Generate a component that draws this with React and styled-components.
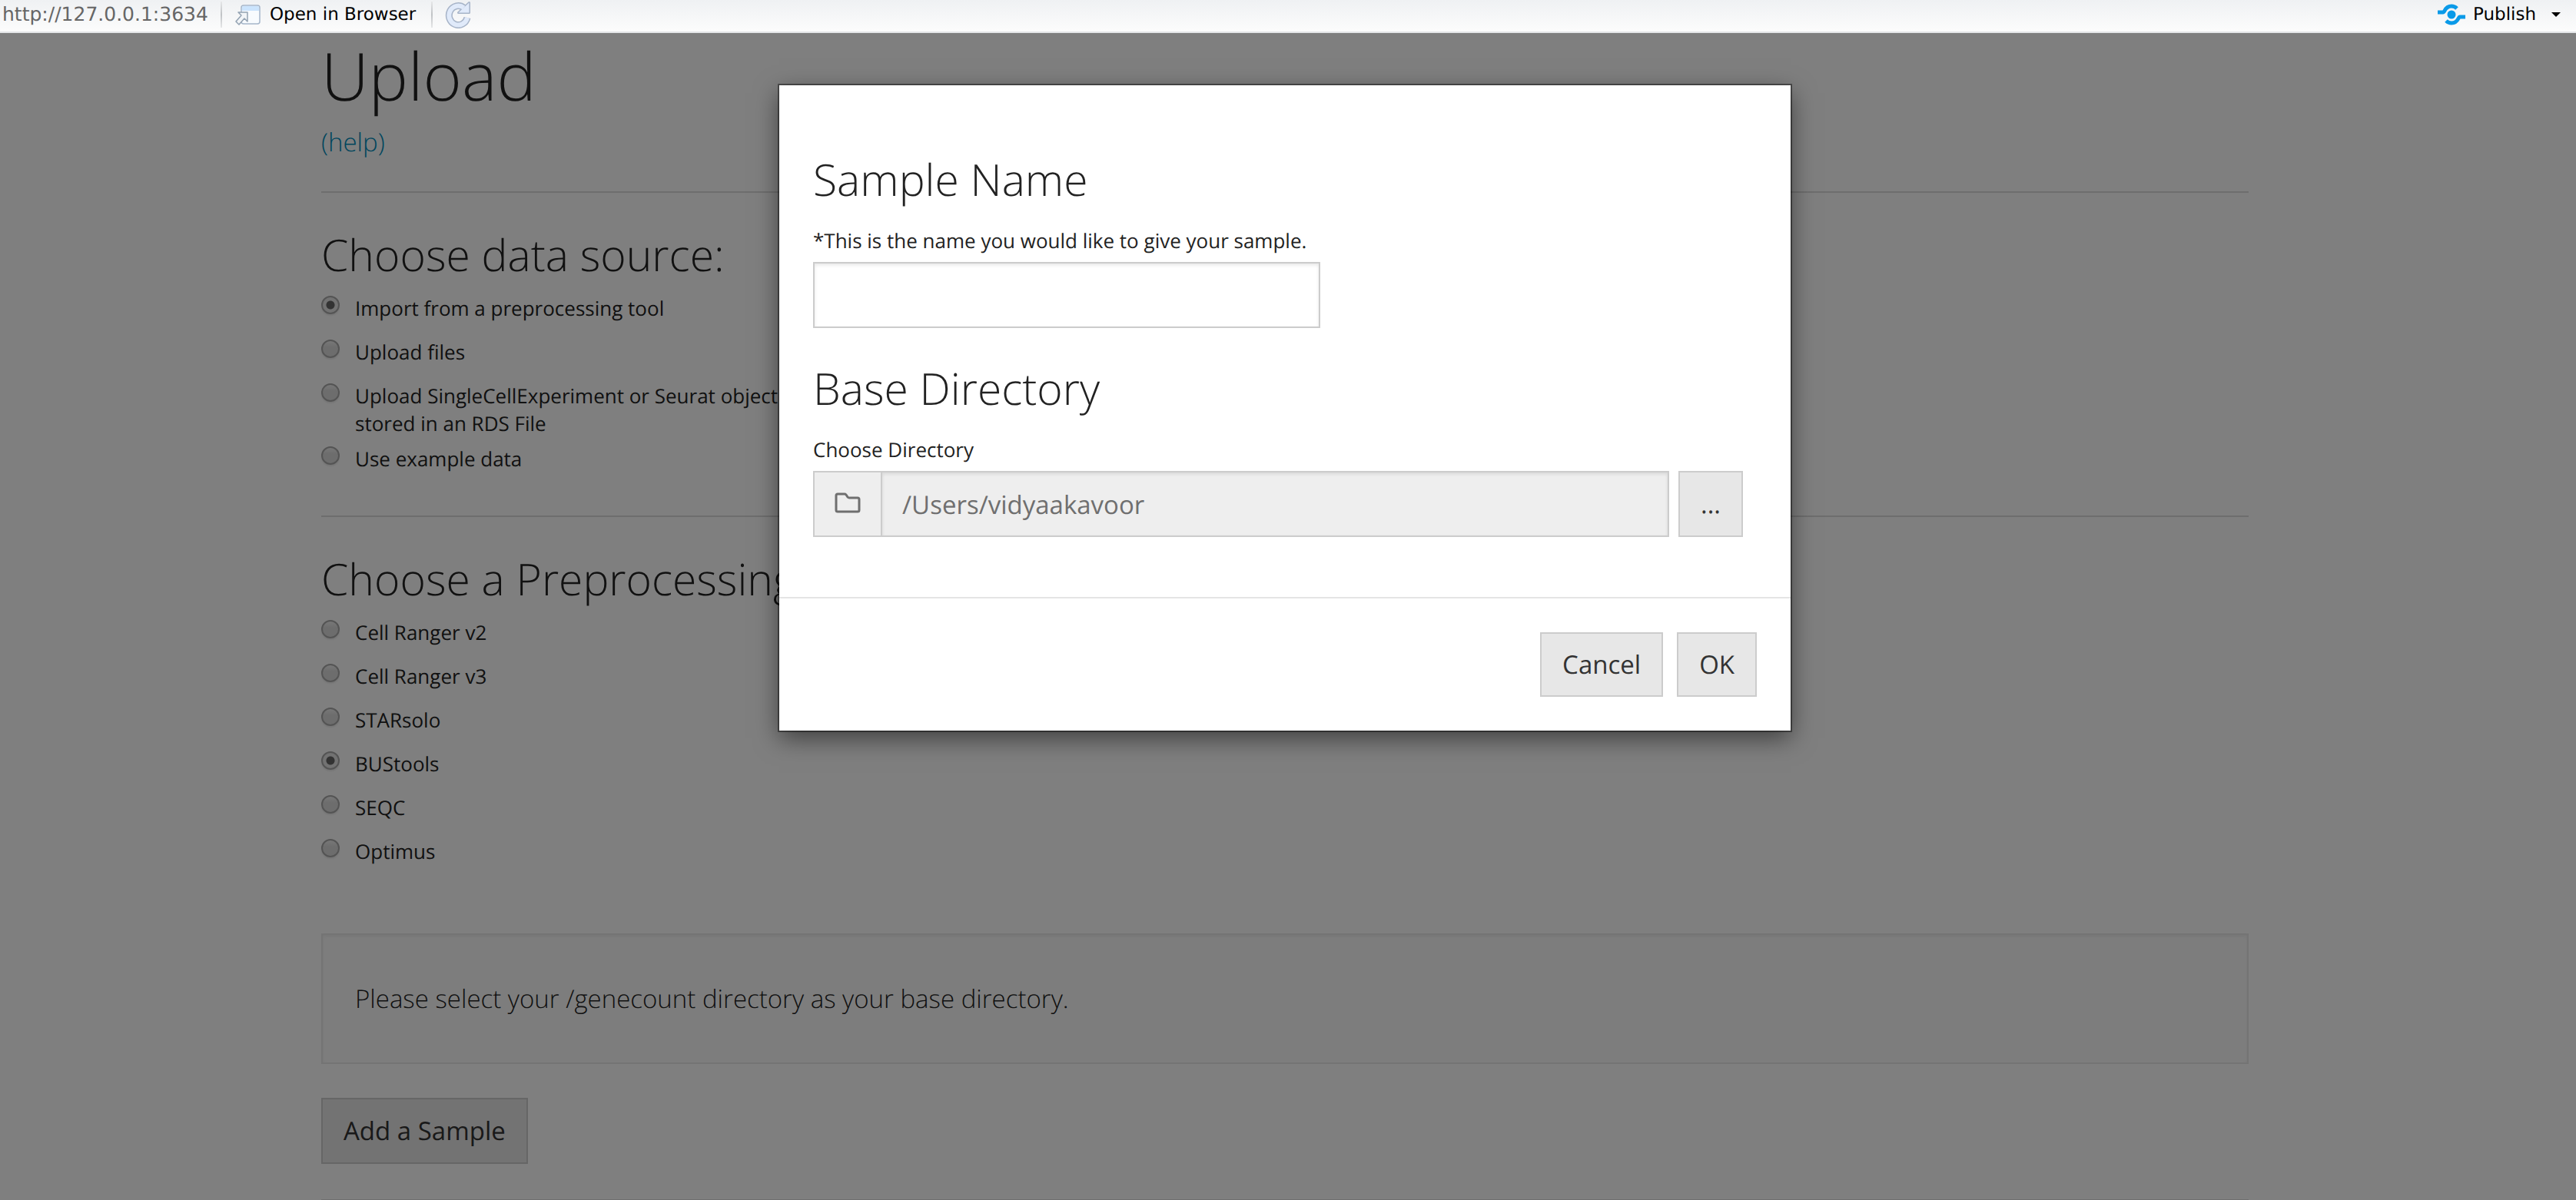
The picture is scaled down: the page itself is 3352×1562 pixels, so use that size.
import React from "react";
import styled, { createGlobalStyle } from "styled-components";

const Global = createGlobalStyle`
  *, *::before, *::after { box-sizing: border-box; }
  html, body, #root { height: 100%; }
  body {
    margin: 0;
    overflow: hidden;
    font-family: "Open Sans", "Noto Sans", sans-serif;
    font-size: 33px;
    line-height: 48px;
    font-weight: 300;
    color: #222;
    background: #fff;
    text-rendering: geometricPrecision;
  }
  button, input { font-family: inherit; text-rendering: inherit; }
`;

const Screen = styled.div`
  display: flex;
  flex-direction: column;
  height: 100%;
`;

const Toolbar = styled.header`
  flex: none;
  display: flex;
  align-items: center;
  height: 43px;
  padding: 0 16px 4px 3px;
  border-bottom: 2px solid #e4e6e8;
  background: linear-gradient(#eff1f3, #fcfcfc);
  font-family: "DejaVu Sans", sans-serif;
  font-size: 25px;
  line-height: 34px;
  font-weight: 400;
`;

const Address = styled.span`
  min-width: 268px;
  color: #666;
`;

const ToolDivider = styled.span`
  width: 2px;
  height: 34px;
  margin: 0 16px;
  background: linear-gradient(#e6e7e8, #bfc2c5, #e6e7e8);
`;

const ToolButton = styled.button`
  display: flex;
  align-items: center;
  gap: 10px;
  padding: 0 4px 0 0;
  border: 0;
  background: none;
  color: #000;
  font-size: 23px;
  line-height: 34px;
  white-space: nowrap;
`;

const Caret = styled.svg`
  margin-left: 10px;
`;

const Spacer = styled.span`
  flex: 1;
`;

const Stage = styled.div`
  position: relative;
  flex: 1;
  min-height: 0;
  padding-right: 8px;
`;

const Page = styled.main`
  width: 75%;
  margin: 0 auto;
`;

const Title = styled.h1`
  margin: 0 0 6px;
  font-size: 86px;
  line-height: 112px;
  font-weight: 300;
`;

const HelpLink = styled.a`
  display: block;
  color: #008cba;
  text-decoration: none;
`;

const Rule = styled.hr`
  height: 0;
  margin: ${(p) => p.$top}px 0 40px;
  border: 0;
  border-top: 2px solid #ddd;
`;

const Heading = styled.h3`
  margin: 0 0 12px;
  font-size: 57px;
  line-height: 80px;
  font-weight: 300;
  white-space: nowrap;
`;

const Options = styled.div`
  display: flex;
  flex-direction: column;
`;

const Option = styled.label`
  display: flex;
  align-items: flex-start;
  gap: 20px;
  max-width: 640px;
  min-height: 57px;
  padding-bottom: 10px;
  font-size: 26px;
  line-height: 36px;
  font-weight: 400;
`;

const Radio = styled.input`
  appearance: none;
  flex: none;
  width: 24px;
  height: 24px;
  margin: 2px 0 0;
  border: 2px solid #a8a8a8;
  border-radius: 50%;
  background: linear-gradient(#f0f0f0, #dadada 40%);
  box-shadow: 0 2px 2px rgba(0, 0, 0, 0.08);
  &:checked {
    background: radial-gradient(circle, #666 5px, #e4e4e4 6px);
  }
`;

const Notice = styled.p`
  margin: 68px 0 44px;
  padding: 59px 42px;
  border: 2px solid #e8e8e8;
  background: #fbfbfb;
  box-shadow: inset 0 2px 4px rgba(0, 0, 0, 0.06);
`;

const Button = styled.button`
  height: ${(p) => (p.$tall ? 86 : 84)}px;
  padding: 0 27px;
  border: 2px solid #ccc;
  border-radius: 0;
  background: #e7e7e7;
  color: #333;
  font-size: 33px;
  line-height: 48px;
  font-weight: 400;
`;

const Backdrop = styled.div`
  position: absolute;
  inset: 0;
  padding: 68px 8px 0 0;
  background: rgba(0, 0, 0, 0.5);
`;

const Dialog = styled.section`
  width: 1316px;
  max-width: 100%;
  margin: 0 auto;
  background: #fff;
  box-shadow: 0 0 0 2px rgba(0, 0, 0, 0.4), 0 10px 30px rgba(0, 0, 0, 0.5);
`;

const DialogBody = styled.div`
  padding: 82px 62px 78px 44px;
`;

const FieldLabel = styled.label`
  display: block;
  font-size: 26px;
  line-height: 56px;
  font-weight: 400;
`;

const TextBox = styled.input`
  display: block;
  width: ${(p) => p.$width || "100%"};
  height: 86px;
  padding: 0 26px;
  border: 2px solid #ccc;
  border-radius: 0;
  background: ${(p) => (p.readOnly ? "#eee" : "#fff")};
  box-shadow: inset 0 2px 4px rgba(0, 0, 0, 0.1);
  color: #6f6f6f;
  font-size: 33px;
  font-weight: 400;
`;

const Field = styled.div`
  margin-bottom: 38px;
`;

const PathRow = styled.div`
  display: flex;
`;

const PathIcon = styled.span`
  flex: none;
  display: flex;
  align-items: center;
  justify-content: center;
  width: 88px;
  border: 2px solid #ccc;
  border-right: 0;
  background: #eee;
`;

const Browse = styled(Button)`
  flex: none;
  margin-left: 12px;
`;

const DialogFooter = styled.footer`
  display: flex;
  justify-content: flex-end;
  gap: 18px;
  padding: 44px;
  border-top: 2px solid #e5e5e5;
`;

const BrowserIcon = () => (
  <svg width="36" height="30" viewBox="0 0 36 30" aria-hidden="true">
    <rect x="9" y="3" width="24" height="24" rx="3" fill="#f8fbfe" stroke="#a5b6ca" strokeWidth="1.5" />
    <path d="M10 10V6q0-2 2-2h18q2 0 2 2v4z" fill="#cbe4fd" />
    <path d="M5 12h12v12l-4-4-7 8-4-4 7-8z" fill="#f1f4f7" stroke="#93a2b2" strokeWidth="1.5" strokeLinejoin="round" />
  </svg>
);

const ReloadShape = ({ color, arc, edge }) => (
  <g stroke={color} strokeLinejoin="round">
    <path d="M24.500 9A12 12.500 0 1 0 29 22" fill="none" strokeWidth={arc} />
    <path d="M31.500 2.500V15.500H17.500z" fill={color} strokeWidth={edge} />
  </g>
);

const ReloadIcon = () => (
  <svg width="36" height="36" viewBox="0 0 36 36" aria-hidden="true">
    <ReloadShape color="#a7b4c8" arc={9} edge={3} />
    <ReloadShape color="#e0eafa" arc={6} edge={0} />
  </svg>
);

const PublishIcon = () => (
  <svg width="36" height="30" viewBox="0 0 36 30" aria-hidden="true">
    <circle cx="18" cy="15" r="5.5" fill="#0a9ae8" />
    <path d="M0 12h7q1 0 2-2 3-6 9-6 4 0 7 3M36 18h-7q-1 0-2 2-3 6-9 6-4 0-7-3" fill="none" stroke="#0a9ae8" strokeWidth="5" />
  </svg>
);

const FolderIcon = () => (
  <svg width="34" height="32" viewBox="0 0 34 32" fill="none" stroke="#6f6f6f" strokeWidth="3" strokeLinejoin="round" aria-hidden="true">
    <path d="M2 5q0-2 2-2h9q1 0 2 1l2 3q1 1 2 1h11q2 0 2 2v14q0 2-2 2H4q-2 0-2-2z" />
  </svg>
);

const sources = [
  "Import from a preprocessing tool",
  "Upload files",
  "Upload SingleCellExperiment or Seurat object stored in an RDS File",
  "Use example data",
];
const tools = ["Cell Ranger v2", "Cell Ranger v3", "STARsolo", "BUStools", "SEQC", "Optimus"];

const RadioGroup = ({ name, items, selected }) => (
  <Options role="radiogroup">
    {items.map((item) => (
      <Option key={item}>
        <Radio type="radio" name={name} defaultChecked={item === selected} />
        {item}
      </Option>
    ))}
  </Options>
);

export default function App() {
  return (
    <Screen>
      <Global />
      <Toolbar>
        <Address>http://127.0.0.1:3634</Address>
        <ToolDivider />
        <ToolButton><BrowserIcon />Open in Browser</ToolButton>
        <ToolDivider />
        <ToolButton aria-label="Reload"><ReloadIcon /></ToolButton>
        <Spacer />
        <ToolButton>
          <PublishIcon />
          Publish
          <Caret width="12" height="6" viewBox="0 0 12 6" aria-hidden="true"><path d="M0 0h12L6 6z" /></Caret>
        </ToolButton>
      </Toolbar>
      <Stage>
        <Page>
          <Title>Upload</Title>
          <HelpLink href="#help">(help)</HelpLink>
          <Rule $top={40} />
          <Heading>Choose data source:</Heading>
          <RadioGroup name="source" items={sources} selected={sources[0]} />
          <Rule $top={35} />
          <Heading>Choose a Preprocessing Tool:</Heading>
          <RadioGroup name="tool" items={tools} selected="BUStools" />
          <Notice>Please select your /genecount directory as your base directory.</Notice>
          <Button $tall>Add a Sample</Button>
          <Rule $top={46} />
        </Page>
        <Backdrop>
          <Dialog role="dialog" aria-modal="true">
            <DialogBody>
              <Heading>Sample Name</Heading>
              <Field>
                <FieldLabel htmlFor="sample">*This is the name you would like to give your sample.</FieldLabel>
                <TextBox id="sample" $width="660px" />
              </Field>
              <Heading>Base Directory</Heading>
              <FieldLabel htmlFor="directory">Choose Directory</FieldLabel>
              <PathRow>
                <PathIcon><FolderIcon /></PathIcon>
                <TextBox id="directory" readOnly value="/Users/vidyaakavoor" />
                <Browse $tall>...</Browse>
              </PathRow>
            </DialogBody>
            <DialogFooter>
              <Button>Cancel</Button>
              <Button>OK</Button>
            </DialogFooter>
          </Dialog>
        </Backdrop>
      </Stage>
    </Screen>
  );
}
